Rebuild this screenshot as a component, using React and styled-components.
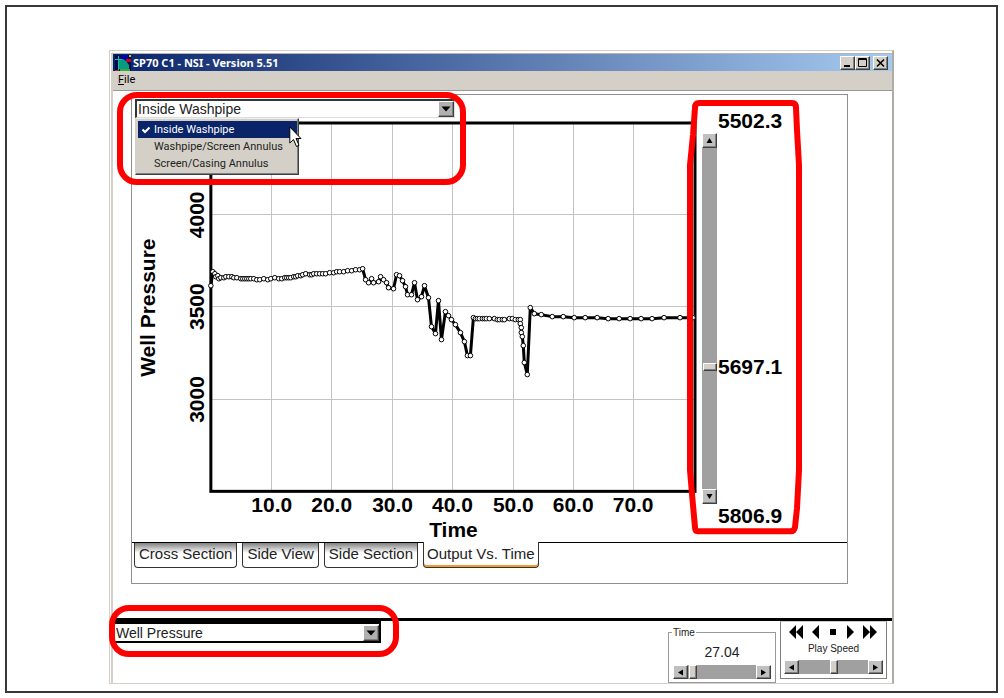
import React, { useState } from 'react';
import styled, { createGlobalStyle, css } from 'styled-components';

const GlobalStyle = createGlobalStyle`
  * {
    box-sizing: border-box;
  }

  body {
    margin: 0;
    background: #fff;
    font-family: "Liberation Sans", Arial, sans-serif;
    color: #000;
  }
`;

const titleFont = '"Noto Sans", Tahoma, sans-serif';
const menuFont = 'Roboto, Tahoma, sans-serif';

const raised = css`
  border: 1px solid;
  border-color: #fff #404040 #404040 #fff;
  box-shadow: inset -1px -1px 0 #808080;
`;

const Frame = styled.div`
  margin: 5px 6px 5px 5px;
  padding: 43px 102px 7px;
  border: 2px solid #38383c;
`;

const Window = styled.main`
  padding: 2px 0 0 1px;
  border: 1px solid #d4d0c8;
  border-right: 2px solid #b0aca6;
`;

const WindowInner = styled.div`
  border-top: 1px solid #b8b4ae;
  border-left: 2px solid #d4d0c8;
`;

const TitleBar = styled.header`
  display: flex;
  align-items: center;
  gap: 2px;
  height: 17px;
  padding: 0 4px 0 2px;
  background: linear-gradient(90deg, #0a246a, #a6caf0);
`;

const Title = styled.h1`
  flex: 1;
  margin: 0;
  color: #fff;
  font: bold 11px/15px ${titleFont};
`;

const WindowButtons = styled.div`
  display: flex;
`;

const WindowButton = styled.button`
  ${raised}
  width: 15px;
  height: 14px;
  margin-left: ${(p) => (p.$gap ? '3px' : '0')};
  padding: 0;
  background: #d4d0c8;

  svg {
    display: block;
  }
`;

const MenuBar = styled.nav`
  height: 20px;
  padding-left: 5px;
  border-bottom: 1px solid #999;
  background: #d4d0c8;
`;

const MenuButton = styled.button`
  display: block;
  padding: 0;
  border: none;
  background: none;
  font: 11px/18px ${menuFont};

  u {
    text-underline-offset: 1px;
  }
`;

const Panel = styled.section`
  margin: 3px 44px 34px 18px;
  padding-bottom: 15px;
  border: 1px solid #909090;
`;

const PanelBody = styled.div`
  display: flex;
`;

const ChartColumn = styled.div`
  display: flex;
  flex: 1;
  flex-direction: column;
  gap: 1px;
  min-width: 0;
  padding-top: 4px;
`;

const ComboArea = styled.div`
  position: relative;
  width: 320px;
  margin-left: 3px;
`;

const Combo = styled.div`
  display: grid;
  align-items: center;
  height: 19px;
  border: 2px solid;
  border-color: #333 #ddd #ddd #333;
  border-bottom-width: 1px;
  border-right-width: 1px;
  background: #fff;
`;

const Select = styled.select`
  grid-area: 1 / 1;
  width: 100%;
  height: 16px;
  padding: 0 20px 0 1px;
  border: none;
  outline: none;
  appearance: none;
  background: #fff;
  color: #222;
  font: 14px/16px "Liberation Sans", Arial, sans-serif;
`;

const ComboArrow = styled.span`
  ${raised}
  grid-area: 1 / 1;
  justify-self: end;
  display: grid;
  place-items: center;
  width: 16px;
  height: 16px;
  background: #b0b0b0;
  pointer-events: none;
`;

const Menu = styled.div`
  position: absolute;
  z-index: 3;
  top: 19px;
  left: 0;
  width: 164px;
  padding: 2px 1px 2px 2px;
  border: 1px solid;
  border-color: #eee #404040 #404040 #d4d0c8;
  box-shadow: inset -1px -1px 0 #808080;
  background: #d4d0c8;
`;

const MenuItem = styled.button`
  display: flex;
  align-items: center;
  width: 159px;
  height: 17px;
  padding: 0;
  border: none;
  background: ${(p) => (p.$active ? '#0a246a' : 'transparent')};
  color: ${(p) => (p.$active ? '#fff' : '#222')};
  font: 11px/15px ${menuFont};
`;

const CheckSlot = styled.span`
  display: flex;
  justify-content: center;
  width: 16px;
`;

const Cursor = styled.svg`
  position: absolute;
  z-index: 5;
  top: 27px;
  left: 154px;
`;

const Highlight = styled.div`
  position: absolute;
  z-index: 4;
  inset: ${(p) => p.$inset};
  border: 6px solid #f00;
  border-radius: 20px;
  pointer-events: none;
`;

const Chart = styled.svg`
  display: block;
  width: 100%;

  text {
    font: bold 21px "Liberation Sans", Arial, sans-serif;
    text-anchor: middle;
  }
`;

const DepthColumn = styled.div`
  position: relative;
  display: grid;
  grid-template-columns: 15px 1fr;
  grid-template-rows: 24px 1fr 23px;
  width: 146px;
  padding: 14px 0 15px 1px;
`;

const DepthLabel = styled.span`
  grid-column: 2;
  padding-left: 1px;
  font: bold 21px/23px "Liberation Sans", Arial, sans-serif;
`;

const DepthScroll = styled.div`
  grid-column: 1;
  display: flex;
  flex-direction: column;
`;

const DepthValue = styled.div`
  display: flex;
  flex-direction: column;
  padding: 15px 0;
`;

const Spacer = styled.div`
  flex-basis: 0;
`;

const ValueLabel = styled.output`
  padding-left: 1px;
  font: bold 21px/8px "Liberation Sans", Arial, sans-serif;
`;

const ArrowButton = styled.button`
  ${raised}
  display: grid;
  flex: none;
  place-items: center;
  width: 15px;
  height: ${(p) => (p.$low ? '14px' : '15px')};
  padding: 0;
  background: #c0c0c0;
`;

const Slider = styled.input`
  flex: 1;
  min-width: 0;
  min-height: 0;
  margin: 0;
  appearance: none;
  background: #a0a0a0;
  outline: none;

  &::-webkit-slider-thumb {
    ${raised}
    appearance: none;
    width: 8px;
    height: 14px;
    background: #d4d0c8;
  }
`;

const VerticalSlider = styled(Slider)`
  width: 15px;
  writing-mode: vertical-lr;

  &::-webkit-slider-thumb {
    width: 14px;
    height: 8px;
  }
`;

const DepthOutline = styled.svg`
  position: absolute;
  z-index: 4;
  top: 5px;
  left: -14px;
  width: 116px;
  height: calc(100% - 13px);
  overflow: visible;
  pointer-events: none;
`;

const Tabs = styled.div`
  display: flex;
  gap: 5px;
  padding-left: 2px;
  border-top: 1px solid #000;
`;

const Tab = styled.button`
  height: 25px;
  margin-top: ${(p) => (p.$active ? '-1px' : '0')};
  padding: 0 4px 3px;
  border: 1px solid #333;
  border-top: none;
  border-radius: 0 0 4px 4px;
  background: linear-gradient(#808080, #fff 10px);
  color: #222;
  font: 15px "Liberation Sans", Arial, sans-serif;

  ${(p) =>
    p.$active &&
    css`
      height: 26px;
      padding: 0 3px 2px;
      background: #fff;
      box-shadow: inset 0 -2px 0 #f29a2e;
    `}
`;

const Footer = styled.footer`
  display: flex;
  gap: 4px;
  height: 65px;
  padding-right: 5px;
  border-top: 3px solid #000;
`;

const VariableArea = styled.div`
  position: relative;
  width: 268px;
  margin-right: auto;
`;

const VariableCombo = styled(Combo)`
  height: 22px;
  padding-left: 2px;
  border: 2px solid #000;
  border-top-width: 3px;
  border-left-width: 0;
`;

const TimeBox = styled.fieldset`
  display: flex;
  flex-direction: column;
  width: 108px;
  min-width: 0;
  margin: 6px 0 0;
  padding: 0 4px;
  border: 1px solid #999;

  legend {
    padding: 0 1px;
    margin-left: -1px;
    color: #222;
    font-size: 10px;
    line-height: 11px;
  }

  output {
    padding: 4px 0 3px;
    color: #222;
    font-size: 14px;
    line-height: 20px;
    text-align: center;
  }
`;

const PlayBox = styled.div`
  display: flex;
  flex-direction: column;
  width: 107px;
  height: 58px;
  padding: 2px 3px;
  border: 1px solid #808080;
  border-top-color: #ccc;

  label {
    padding: 2px 0 4px;
    color: #222;
    font-size: 10px;
    line-height: 14px;
    text-align: center;
  }
`;

const Transport = styled.div`
  display: flex;
  justify-content: space-between;
  padding: 1px 6px 1px 5px;

  button {
    padding: 0;
    border: none;
    background: none;
  }

  svg {
    display: block;
  }
`;

const SliderRow = styled.div`
  display: flex;
`;

const places = ['Inside Washpipe', 'Washpipe/Screen Annulus', 'Screen/Casing Annulus'];
const tabs = ['Cross Section', 'Side View', 'Side Section', 'Output Vs. Time'];
const timeTicks = [10, 20, 30, 40, 50, 60, 70];
const pressureTicks = [3000, 3500, 4000];

// plot area inside the chart drawing
const plot = { left: 79, top: 4, right: 564, bottom: 373 };
const timeX = (t) => Math.round(plot.left + 0.5 + t * 6.04);
const pressureY = (p) => Math.round(96 + (4000 - p) * 0.1847);

const samples = [
  [79, 167], [81, 153], [83, 155], [84, 158], [86, 157], [87, 160], [89, 159], [92, 159],
  [94, 158], [97, 158], [100, 158], [102, 159], [105, 159], [109, 160], [111, 160], [113, 160],
  [115, 160], [117, 160], [119, 160], [122, 160], [125, 161], [128, 161], [132, 160], [136, 161],
  [139, 160], [143, 159], [147, 160], [150, 160], [153, 159], [155, 159], [157, 159], [159, 159],
  [162, 158], [164, 158], [166, 157], [169, 157], [171, 156], [174, 155], [178, 156], [180, 156],
  [182, 155], [185, 155], [188, 155], [191, 155], [194, 155], [198, 154], [202, 154], [205, 153],
  [208, 153], [212, 153], [216, 152], [220, 152], [224, 151], [228, 151], [231, 150], [234, 161],
  [237, 164], [240, 160], [242, 164], [247, 163], [249, 158], [252, 161], [255, 164], [257, 169],
  [262, 170], [265, 156], [268, 157], [271, 162], [274, 168], [276, 176], [280, 176], [283, 164],
  [286, 181], [290, 178], [293, 167], [297, 179], [300, 208], [304, 215], [307, 182], [310, 221],
  [314, 193], [317, 197], [320, 201], [324, 206], [329, 214], [333, 223], [336, 237], [339, 237],
  [342, 199], [344, 200], [346, 200], [348, 200], [351, 200], [353, 200], [355, 200], [358, 200],
  [363, 200], [366, 201], [368, 201], [371, 201], [373, 201], [378, 200], [381, 200], [384, 201],
  [387, 201], [389, 201], [389, 205], [390, 209], [390, 214], [391, 218], [392, 227], [393, 244],
  [396, 256], [399, 189], [403, 195], [410, 196], [421, 198], [432, 198], [443, 199], [454, 199],
  [466, 199], [477, 200], [488, 200], [499, 200], [510, 200], [521, 200], [533, 199], [549, 199],
  [562, 199],
];

const Triangle = ({ dir }) => {
  const paths = {
    up: 'M3.5 1 L6.5 6 H0.5 Z',
    down: 'M0.5 1 H6.5 L3.5 6 Z',
    left: 'M6 0.5 V6.5 L1 3.5 Z',
    right: 'M1 0.5 V6.5 L6 3.5 Z',
  };
  return (
    <svg width="7" height="7" aria-hidden="true">
      <path d={paths[dir]} />
    </svg>
  );
};

const DropArrow = () => (
  <ComboArrow>
    <svg width="10" height="6" aria-hidden="true">
      <path d="M0.5 0.5 H9.5 L5 5.5 Z" />
    </svg>
  </ComboArrow>
);

const AppIcon = () => (
  <svg width="16" height="16" aria-hidden="true">
    <path fill="#000a50" d="M0 0H16V16H0Z" />
    <path fill="#0000b0" d="M6 0H13V5H6Z" />
    <path fill="#d00010" d="M11 4H16V7H11Z" />
    <path fill="#e0c020" d="M14 0H16V2H14Z" />
    <path fill="#0a9a82" d="M4 4H8L11 6L14 10V14H4Z" />
    <path fill="none" stroke="#18c0a0" d="M3.5 1V15M0 4.5H7" />
    <path fill="#c02020" d="M0 15H4V16H0Z" />
    <path fill="#30b030" d="M5 14H15V16H5Z" />
  </svg>
);

const PressureChart = () => (
  <Chart viewBox="0 0 570 424" role="img" aria-label="Well Pressure, Time">
    <g stroke="#c4c4c4" shapeRendering="crispEdges">
      {timeTicks.map((t) => (
        <line key={t} x1={timeX(t)} x2={timeX(t)} y1={plot.top} y2={plot.bottom} />
      ))}
      {pressureTicks.map((p) => (
        <line key={p} x1={plot.left} x2={plot.right} y1={pressureY(p)} y2={pressureY(p)} />
      ))}
    </g>
    <rect
      x={plot.left}
      y={plot.top}
      width={plot.right - plot.left}
      height={plot.bottom - plot.top}
      fill="none"
      stroke="#000"
      strokeWidth="3"
    />
    <polyline points={samples.join(' ')} fill="none" stroke="#000" strokeWidth="3" strokeLinejoin="bevel" />
    <g fill="#fff" stroke="#000" strokeWidth="1">
      {samples.map(([x, y], i) => (
        <circle key={i} cx={x} cy={y} r="2.3" />
      ))}
    </g>
    {timeTicks.map((t) => (
      <text key={t} x={timeX(t)} y="394">
        {t.toFixed(1)}
      </text>
    ))}
    {pressureTicks.map((p) => (
      <text key={p} transform={`translate(72 ${pressureY(p)}) rotate(-90)`}>
        {p}
      </text>
    ))}
    <text x="322" y="419">Time</text>
    <text transform="translate(23 189) rotate(-90)">Well Pressure</text>
  </Chart>
);

const App = () => {
  const [place, setPlace] = useState(places[0]);
  const [tab, setTab] = useState(tabs[3]);
  const [depth, setDepth] = useState(645);

  return (
    <>
      <GlobalStyle />
      <Frame>
        <Window>
          <WindowInner>
            <TitleBar>
              <AppIcon />
              <Title>SP70 C1 - NSI - Version 5.51</Title>
              <WindowButtons>
                <WindowButton aria-label="Minimize">
                  <svg width="13" height="12"><path d="M3 8H9V10H3Z" /></svg>
                </WindowButton>
                <WindowButton aria-label="Maximize">
                  <svg width="13" height="12">
                    <path d="M2.5 1.5H10.5V9.5H2.5ZM2 2.5H11" fill="none" stroke="#000" />
                  </svg>
                </WindowButton>
                <WindowButton aria-label="Close" $gap>
                  <svg width="13" height="12">
                    <path d="M3 2.5L10 9.5M10 2.5L3 9.5" stroke="#000" strokeWidth="1.6" />
                  </svg>
                </WindowButton>
              </WindowButtons>
            </TitleBar>
            <MenuBar>
              <MenuButton><u>F</u>ile</MenuButton>
            </MenuBar>

            <Panel>
              <PanelBody>
                <ChartColumn>
                  <ComboArea>
                    <Combo>
                      <Select aria-label="Location" value={place} onChange={(e) => setPlace(e.target.value)}>
                        {places.map((p) => (
                          <option key={p}>{p}</option>
                        ))}
                      </Select>
                      <DropArrow />
                    </Combo>
                    <Menu>
                      {places.map((p) => (
                        <MenuItem key={p} $active={p === place} onClick={() => setPlace(p)}>
                          <CheckSlot>
                            {p === place && (
                              <svg width="8" height="8" aria-hidden="true">
                                <path d="M0.5 3.5L3 6L7.5 1.5" fill="none" stroke="#fff" strokeWidth="2" />
                              </svg>
                            )}
                          </CheckSlot>
                          {p}
                        </MenuItem>
                      ))}
                    </Menu>
                    <Cursor width="13" height="22" aria-hidden="true">
                      <path
                        d="M0.8 1V17L4.5 13.5L7.5 20.5L10 19.3L7 12.5H12Z"
                        fill="#fff"
                        stroke="#000"
                      />
                    </Cursor>
                    <Highlight $inset="-7px -11px -67px -18px" />
                  </ComboArea>
                  <PressureChart />
                </ChartColumn>

                <DepthColumn>
                  <DepthLabel>5502.3</DepthLabel>
                  <DepthScroll>
                    <ArrowButton aria-label="Up"><Triangle dir="up" /></ArrowButton>
                    <VerticalSlider
                      type="range"
                      aria-label="Depth"
                      min="0"
                      max="1000"
                      value={depth}
                      onChange={(e) => setDepth(Number(e.target.value))}
                    />
                    <ArrowButton aria-label="Down"><Triangle dir="down" /></ArrowButton>
                  </DepthScroll>
                  <DepthValue>
                    <Spacer style={{ flexGrow: depth }} />
                    <ValueLabel>5697.1</ValueLabel>
                    <Spacer style={{ flexGrow: 1000 - depth }} />
                  </DepthValue>
                  <DepthLabel>5806.9</DepthLabel>
                  <DepthOutline viewBox="0 0 116 434" preserveAspectRatio="none">
                    <path
                      d="M12 3H105Q109 3 109 8L110 30L112 65V370L110 408L108 427Q107 431 104 431H11Q8 431 8 427L6 405L3 370V65L6 35L8 8Q8 3 12 3Z"
                      fill="none"
                      stroke="#f00"
                      strokeWidth="6"
                    />
                  </DepthOutline>
                </DepthColumn>
              </PanelBody>
              <Tabs role="tablist">
                {tabs.map((t) => (
                  <Tab key={t} role="tab" aria-selected={t === tab} $active={t === tab} onClick={() => setTab(t)}>
                    {t}
                  </Tab>
                ))}
              </Tabs>
            </Panel>

            <Footer>
              <VariableArea>
                <VariableCombo>
                  <Select aria-label="Variable">
                    <option>Well Pressure</option>
                  </Select>
                  <DropArrow />
                </VariableCombo>
                <Highlight $inset="-16px -18px 26px -4px" />
              </VariableArea>
              <TimeBox>
                <legend>Time</legend>
                <output>27.04</output>
                <SliderRow>
                  <ArrowButton $low aria-label="Earlier"><Triangle dir="left" /></ArrowButton>
                  <Slider type="range" aria-label="Time" defaultValue="2" />
                  <ArrowButton $low aria-label="Later"><Triangle dir="right" /></ArrowButton>
                </SliderRow>
              </TimeBox>
              <PlayBox>
                <Transport>
                  <button aria-label="Rewind">
                    <svg width="14" height="14"><path d="M7 0V14L0 7ZM14 0V14L7 7Z" /></svg>
                  </button>
                  <button aria-label="Back">
                    <svg width="8" height="14"><path d="M7 0V14L0 7Z" /></svg>
                  </button>
                  <button aria-label="Stop">
                    <svg width="8" height="14"><path d="M1 4H7V10H1Z" /></svg>
                  </button>
                  <button aria-label="Play">
                    <svg width="8" height="14"><path d="M1 0V14L8 7Z" /></svg>
                  </button>
                  <button aria-label="Fast forward">
                    <svg width="14" height="14"><path d="M0 0V14L7 7ZM7 0V14L14 7Z" /></svg>
                  </button>
                </Transport>
                <label htmlFor="speed">Play Speed</label>
                <SliderRow>
                  <ArrowButton $low aria-label="Slower"><Triangle dir="left" /></ArrowButton>
                  <Slider id="speed" type="range" defaultValue="50" />
                  <ArrowButton $low aria-label="Faster"><Triangle dir="right" /></ArrowButton>
                </SliderRow>
              </PlayBox>
            </Footer>
          </WindowInner>
        </Window>
      </Frame>
    </>
  );
};

export default App;
